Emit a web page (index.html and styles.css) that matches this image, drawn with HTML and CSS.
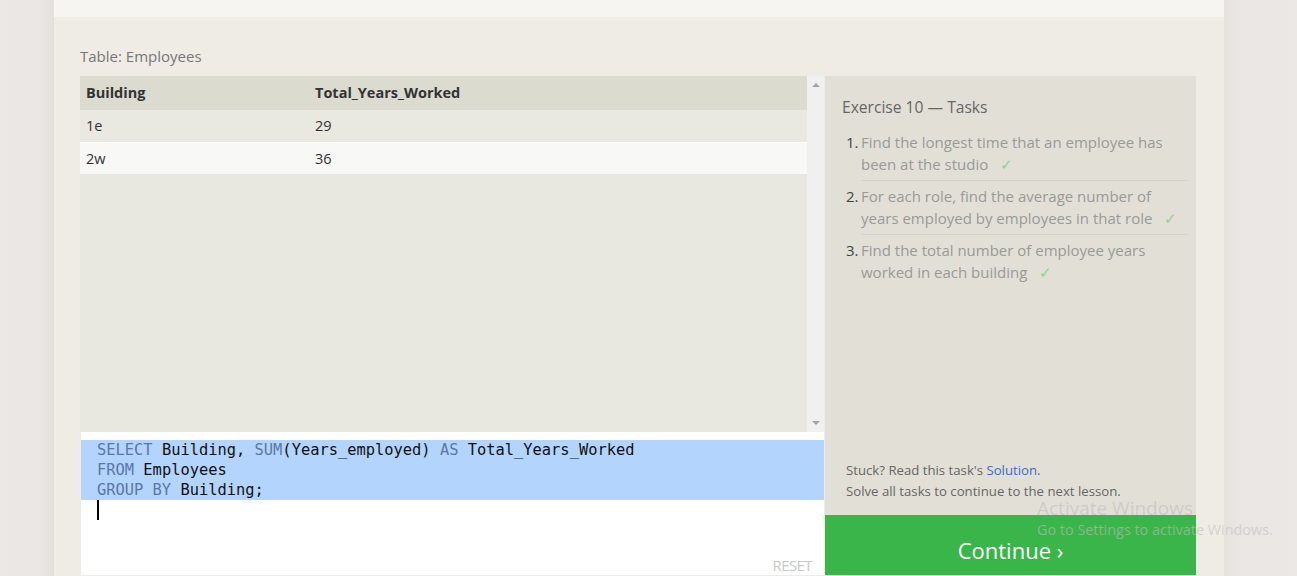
FILE: index.html
```html
<!DOCTYPE html>
<html>
<head>
<meta charset="utf-8">
<link rel="stylesheet" href="styles.css">
</head>
<body>
<div class="page">
  <div class="topbar"></div>
  <div class="section">
    <div class="table-label">Table: Employees</div>
    <div class="workspace">
      <div class="left">
        <div class="results">
          <div class="table">
            <div class="row head"><div class="cell">Building</div><div class="cell">Total_Years_Worked</div></div>
            <div class="row odd"><div class="cell">1e</div><div class="cell">29</div></div>
            <div class="row even"><div class="cell">2w</div><div class="cell">36</div></div>
          </div>
          <div class="scrollbar">
            <span class="arrow up"></span>
            <span class="arrow down"></span>
          </div>
        </div>
        <div class="editor">
          <div class="selection">
            <div class="line"><span class="kw">SELECT</span> Building, <span class="kw">SUM</span>(Years_employed) <span class="kw">AS</span> Total_Years_Worked</div>
            <div class="line"><span class="kw">FROM</span> Employees</div>
            <div class="line"><span class="kw">GROUP BY</span> Building;</div>
          </div>
          <div class="line"><span class="cursor"></span></div>
          <div class="reset">RESET</div>
        </div>
      </div>
      <div class="tasks">
        <div class="tasks-body">
          <div class="tasks-title">Exercise 10 — Tasks</div>
          <ol class="task-list">
            <li><span class="num">1.</span><span class="text">Find the longest time that an employee has been at the studio <span class="check">✓</span></span></li>
            <li><span class="num">2.</span><span class="text">For each role, find the average number of years employed by employees in that role <span class="check">✓</span></span></li>
            <li><span class="num">3.</span><span class="text">Find the total number of employee years worked in each building <span class="check">✓</span></span></li>
          </ol>
        </div>
        <div class="tasks-foot">
          <div class="hint">Stuck? Read this task's <span class="link">Solution</span>.</div>
          <div class="hint">Solve all tasks to continue to the next lesson.</div>
        </div>
        <div class="continue">Continue ›</div>
      </div>
    </div>
  </div>
</div>
<div class="watermark">
  <div class="wm-title">Activate Windows</div>
  <div class="wm-sub">Go to Settings to activate Windows.</div>
</div>
</body>
</html>
```
FILE: styles.css
```css
html, body {
  margin: 0;
  padding: 0;
}
body {
  background: linear-gradient(to right, #ebe8e5 0, #e9e6e3 40px, #e3e0dc 54px, #e6e3df 1224px, #e9e6e3 1240px, #ebe8e5 100%);
  font-family: "Open Sans", "Noto Sans", sans-serif;
  height: 576px;
  overflow: hidden;
  position: relative;
}
.page {
  margin-left: 54px;
  width: 1170px;
  background: #efece6;
  height: 576px;
}
.topbar {
  height: 17px;
  background: #f6f5f2;
}
.section {
  padding: 0 28px 0 26px;
}
.table-label {
  padding-top: 29px;
  margin-bottom: 10px;
  font-size: 15px;
  line-height: 20px;
  color: #777;
}
.workspace {
  display: flex;
}
.left {
  width: 744px;
  display: flex;
  flex-direction: column;
}
.results {
  display: flex;
  height: 356px;
}
.table {
  flex: 1;
  background: #e8e7e0;
}
.row {
  display: grid;
  grid-template-columns: 229px 1fr;
  font-size: 14.5px;
  color: #333;
}
.cell {
  padding-left: 6px;
}
.row.head {
  height: 34px;
  line-height: 34px;
  background: #dcdbd0;
  font-weight: 700;
  color: #333;
}
.row.odd {
  height: 32px;
  line-height: 32px;
  background: #e9e8e1;
  border-bottom: 1px solid #fff;
}
.row.even {
  height: 31px;
  line-height: 31px;
  background: #f8f8f7;
}
.scrollbar {
  width: 17px;
  background: #f0f0f0;
  display: flex;
  flex-direction: column;
  justify-content: space-between;
  align-items: center;
  padding: 7px 0 7px;
  box-sizing: border-box;
}
.arrow {
  width: 0;
  height: 0;
  border-left: 4px solid transparent;
  border-right: 4px solid transparent;
}
.arrow.up {
  border-bottom: 4px solid #a3a3a3;
}
.arrow.down {
  border-top: 4px solid #a3a3a3;
}
.editor {
  position: relative;
  margin-left: 1px;
  height: 143px;
  background: #fff;
  padding-top: 8px;
  box-sizing: border-box;
  font-family: "DejaVu Sans Mono", "Liberation Mono", monospace;
  font-size: 15.4px;
  color: #111;
}
.selection {
  background: #b3d4fc;
}
.line {
  height: 20px;
  line-height: 20px;
  padding-left: 16px;
  white-space: pre;
}
.kw {
  color: #5b77a6;
}
.cursor {
  display: inline-block;
  width: 2px;
  height: 20px;
  background: #000;
  vertical-align: top;
}
.reset {
  position: absolute;
  right: 12px;
  bottom: 0;
  font-family: "Open Sans", sans-serif;
  font-size: 15px;
  line-height: 20px;
  letter-spacing: -0.6px;
  color: #c8c8c8;
}
.tasks {
  width: 371px;
  margin-left: 1px;
  background: #e2e0d6;
  display: flex;
  flex-direction: column;
}
.tasks-body {
  flex: 1;
  padding: 20px 8px 0 17px;
}
.tasks-title {
  font-size: 15.6px;
  line-height: 22px;
  color: #666;
}
.task-list {
  list-style: none;
  margin: 13px 0 0;
  padding: 0;
}
.task-list li {
  display: flex;
  font-size: 15px;
  line-height: 22px;
}
.num {
  width: 19px;
  flex: none;
  padding-left: 4px;
  box-sizing: border-box;
  color: #444;
}
.text {
  flex: 1;
  color: #999;
  padding: 0 8px 5px 0;
  border-bottom: 1px solid #d6d4ca;
  margin-bottom: 4px;
}
.task-list li:last-child .text {
  border-bottom: none;
}
.check {
  color: #8fd08f;
  margin-left: 8px;
}
.tasks-foot {
  padding: 0 0 13px 21px;
}
.hint {
  font-size: 13.2px;
  line-height: 21px;
  color: #666;
}
.link {
  color: #3b6bc4;
}
.continue {
  height: 60px;
  background: #39b54a;
  color: #fff;
  font-size: 22px;
  line-height: 70px;
  text-align: center;
}
.watermark {
  position: absolute;
  left: 1037px;
  top: 495px;
  color: rgba(190, 190, 190, 0.6);
  font-family: "Open Sans", sans-serif;
  pointer-events: none;
}
.wm-title {
  font-size: 19px;
  line-height: 26px;
}
.wm-sub {
  font-size: 14.4px;
  line-height: 20px;
  margin-top: -1px;
}
```
